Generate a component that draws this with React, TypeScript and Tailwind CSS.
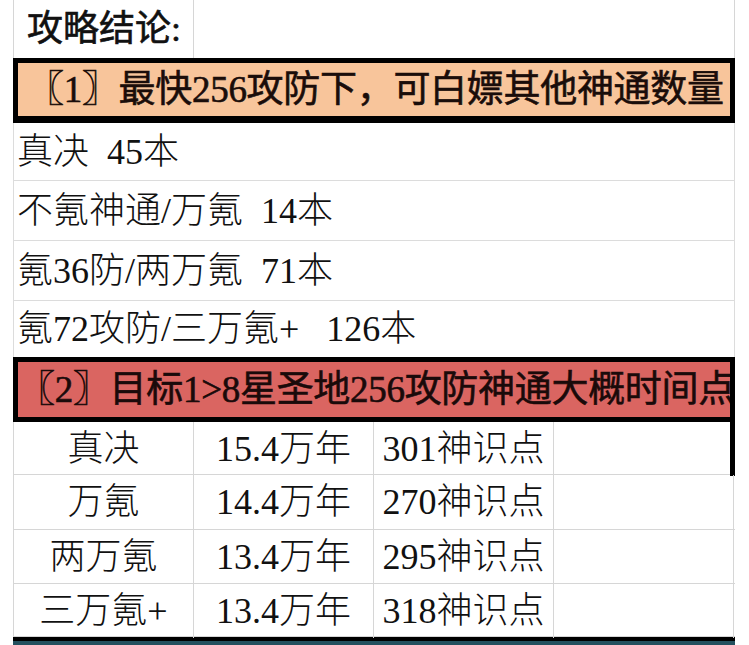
import React from "react";

const body = { fontFamily: '"Liberation Serif", "Noto Sans CJK SC", serif' };
const head = { fontFamily: '"Liberation Serif", "Noto Sans CJK SC", sans-serif' };

const list = ["真决  45本", "不氪神通/万氪  14本", "氪36防/两万氪  71本", "氪72攻防/三万氪+   126本"];
const listH = ["h-[58px]", "h-[60px]", "h-[60px]", "h-[57px]"];

const table = [
  ["真决", "15.4万年", "301神识点"],
  ["万氪", "14.4万年", "270神识点"],
  ["两万氪", "13.4万年", "295神识点"],
  ["三万氪+", "13.4万年", "318神识点"],
];
const tableH = ["h-[53px]", "h-[55px]", "h-[54px]", "h-[53px]"];

export default function App() {
  return (
    <div className="w-[749px] h-[645px] overflow-hidden bg-white text-[#111]">
      <div className="ml-[13px] w-[722px]">
        {/* title row */}
        <div className="flex h-[58px] border-l border-r border-[#d6d6d6]">
          <div
            className="w-[180px] border-r border-[#d6d6d6] flex items-center pl-[13px] text-[36px] [-webkit-text-stroke:0.6px_#111] whitespace-nowrap"
            style={head}
          >
            攻略结论:
          </div>
          <div className="flex-1" />
        </div>

        {/* header 1 */}
        <div
          className="h-[65px] border-[5px] border-b-[7px] border-black bg-[#f8c59b] flex items-center overflow-hidden whitespace-nowrap text-[37px] tracking-[-0.3px] text-[#1a0d0a] [-webkit-text-stroke:0.6px_#1a0d0a] pl-[9px]"
          style={head}
        >
          〖1〗最快256攻防下，可白嫖其他神通数量
        </div>

        {/* list rows */}
        {list.map((t, i) => (
          <div
            key={i}
            className={`${listH[i]} flex items-center border-l border-r border-b border-[#dcdcdc] pl-[3px] text-[36px] font-light whitespace-pre`}
            style={body}
          >
            {t}
          </div>
        ))}

        {/* header 2 */}
        <div
          className="h-[65px] border-[5px] border-black bg-[#da6561] flex items-center overflow-hidden whitespace-nowrap text-[37px] tracking-[-0.3px] text-[#1a0a0a] [-webkit-text-stroke:0.6px_#1a0a0a] -mt-px"
          style={head}
        >
          〖2〗目标1&gt;8星圣地256攻防神通大概时间点
        </div>

        {/* table rows */}
        {table.map((r, i) => (
          <div
            key={i}
            className={`${tableH[i]} grid grid-cols-[180px_180px_180px_1fr] border-l border-b border-[#d6d6d6] text-[36px] font-light`}
            style={body}
          >
            {r.map((c, j) => (
              <div
                key={j}
                className="flex items-center justify-center border-r border-[#d6d6d6] whitespace-nowrap"
              >
                {c}
              </div>
            ))}
            <div
              className={
                i === 0
                  ? "border-r-[5px] border-black"
                  : "border-r border-[#d6d6d6] mr-px"
              }
            />
          </div>
        ))}

        {/* next header (cut off) */}
        <div className="h-[60px] border-t-[4px] border-black bg-[#24505e]" />
      </div>
    </div>
  );
}
